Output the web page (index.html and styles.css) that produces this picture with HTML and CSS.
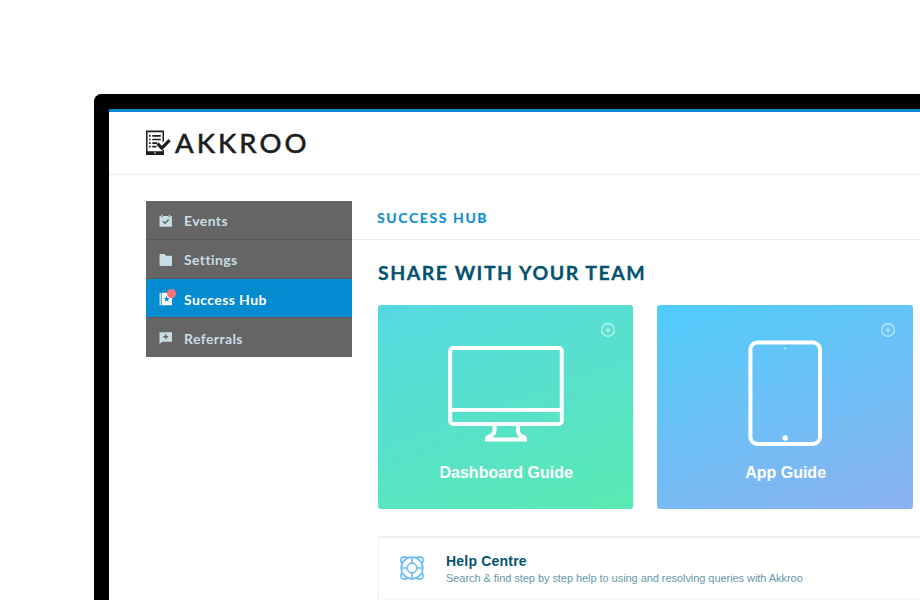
FILE: index.html
```
<!DOCTYPE html>
<html lang="en">
<head>
<meta charset="utf-8">
<title>Akkroo</title>
<link rel="stylesheet" href="styles.css">
</head>
<body>
<div class="device">
  <header class="header">
    <svg class="logo-mark" viewBox="0 0 25 26">
      <path fill="#1d1d1b" fill-rule="evenodd" d="M0 .5h18v10.500l-1.500 1.500V2.300h-15v18.900h15V20H18v5H0zM8 22.400v1.200h1.800v-1.200z"/>
      <path fill="none" stroke="#1d1d1b" stroke-width="1.700" d="M3 5.900h1.700M6.300 5.900h8.500M3 9.500h1.700M6.300 9.500h8.500M3 13.100h1.700M6.300 13.100h5M3 16.700h1.700M6.300 16.700h4"/>
      <path fill="none" stroke="#1d1d1b" stroke-width="3.200" d="M11.600 13.700l4.200 4.400 7.800-8"/>
    </svg>
    <span class="logo-text">AKKROO</span>
  </header>
  <div class="body">
    <nav class="nav">
      <a class="item">
        <svg class="icon" viewBox="0 0 14 14"><path fill="#c7dde6" d="M.5 2h1.500v1.300h1.900V2h5.600v1.300h1.900V2h1.500v10.800H.5zM2.300.7h1.200v1.900H2.300zM9.900.7h1.200v1.900H9.900z"/><path fill="none" stroke="#656565" stroke-width="1.500" d="M4 7.300l2 2 3.700-3.700"/></svg>
        <span>Events</span>
      </a>
      <a class="item">
        <svg class="icon" viewBox="0 0 14 14"><path fill="#c7dde6" d="M.5 2q0-1 1-1h4l1.400 1.700H12q1 0 1 1V12q0 1-1 1H1.500q-1 0-1-1z"/></svg>
        <span>Settings</span>
      </a>
      <a class="item active">
        <svg class="icon" viewBox="0 0 14 14"><path fill="#fff" d="M.6.8h1.200v12.400H.6zM2.700.8H13v12.400H2.700z"/><path fill="#058bd0" d="M7.700 3.800l.9 2.100 2.200.2-1.700 1.500.5 2.200-1.900-1.200-1.900 1.200.5-2.200-1.700-1.500 2.200-.2z"/></svg>
        <i class="dot"></i>
        <span>Success Hub</span>
      </a>
      <a class="item">
        <svg class="icon" viewBox="0 0 14 14"><path fill="#c7dde6" d="M.5 1.300H13v9.400H3.300L.5 13.200z"/><path stroke="#656565" stroke-width="1.400" d="M6.700 3.300v5M4.200 5.800h5"/></svg>
        <span>Referrals</span>
      </a>
    </nav>
    <main class="main">
      <div class="crumb"><span>SUCCESS HUB</span></div>
      <h1 class="title">SHARE WITH YOUR TEAM</h1>
      <div class="cards">
        <section class="card green">
          <svg class="plus" viewBox="0 0 16 16"><circle cx="8" cy="8" r="6.300"/><path d="M8 5.300v5.400M5.300 8h5.400"/></svg>
          <svg class="art" viewBox="0 0 120 110"><rect x="4.200" y="6" width="111.600" height="76" rx="3"/><path d="M4 68h112M48.500 82v6c0 4.500-3 6-6 7q-1.500.4-1.500 2.600h38q0-2.200-1.500-2.600c-3-.8-5.500-2.500-5.500-7v-6"/></svg>
          <h2>Dashboard Guide</h2>
        </section>
        <section class="card blue">
          <svg class="plus" viewBox="0 0 16 16"><circle cx="8" cy="8" r="6.300"/><path d="M8 5.300v5.400M5.300 8h5.400"/></svg>
          <svg class="art" viewBox="0 0 120 110"><rect x="25.400" y=".5" width="69.600" height="101.500" rx="7"/><circle class="fill" cx="60.200" cy="6.300" r=".9"/><circle class="fill" cx="60.200" cy="96" r="2.700"/></svg>
          <h2>App Guide</h2>
        </section>
      </div>
      <section class="help">
        <svg class="ring" viewBox="0 0 24 24"><circle cx="12" cy="12" r="10.800"/><circle cx="12" cy="12" r="4.800"/><path d="M12 1.200v6M12 16.800v6M1.200 12h6M16.800 12h6M8 1.900L4.500.9Q.9.900.9 4.500L1.900 8M16 1.900l3.500-1q3.600 0 3.600 3.600l-1 3.500M8 22.100l-3.500 1Q.9 23.100.9 19.500l1-3.500M16 22.100l3.500 1q3.600 0 3.600-3.600l-1-3.500"/></svg>
        <div>
          <h3>Help Centre</h3>
          <p>Search &amp; find step by step help to using and resolving queries with Akkroo</p>
        </div>
      </section>
    </main>
  </div>
</div>
</body>
</html>
```
FILE: styles.css
```
* { box-sizing: border-box; }
html, body { margin: 0; height: 600px; overflow: hidden; background: #fff; }
body { padding: 94px 0 0 94px; font-family: Lato, "Liberation Sans", sans-serif; }
h1, h2, h3, p { margin: 0; white-space: nowrap; }
.device { height: 506px; border: solid #000; border-width: 15px 0 0 15px; border-radius: 8px 0 0 0; background: #fff; }
.header { height: 66px; border-top: 3px solid #058bd0; border-bottom: 1px solid #ebebeb; padding: 0 0 0 37px; display: flex; align-items: center; }
.logo-mark { width: 25px; height: 26px; display: block; }
.logo-text { margin-left: 4px; font-size: 27.500px; line-height: 34px; letter-spacing: 3.100px; color: #1d1d1b; -webkit-text-stroke: .6px #1d1d1b; }
.body { display: flex; padding: 26px 0 0 37px; }
.nav { width: 206px; height: 156px; flex: none; background: #656565; }
.item { position: relative; display: flex; align-items: center; height: 39px; padding: 1px 0 0 13px; border-bottom: 1px solid #5a5a5a; color: #c7dde6; font-size: 14px; font-weight: 700; letter-spacing: .4px; }
.item:last-child { border-bottom: 0; }
.active { background: #058bd0; color: #fff; padding-top: 2px; }
.icon { width: 14px; height: 14px; margin-right: 11px; }
.dot { position: absolute; left: 21px; top: 10px; width: 9px; height: 9px; border-radius: 50%; background: #fb7377; }
.main { flex: 1; min-width: 0; }
.crumb { height: 39px; padding: 8px 0 0 25px; border-bottom: 1px solid #ebebeb; color: #0f8fd1; font-size: 14px; line-height: 17px; font-weight: 700; letter-spacing: 1.600px; -webkit-text-stroke: .2px #0f8fd1; }
.title { margin: 20px 0 0 26px; color: #03536f; font-size: 19.500px; line-height: 26px; font-weight: 700; letter-spacing: 1.500px; -webkit-text-stroke: .3px #03536f; }
.cards { display: flex; gap: 24px; margin: 19px 0 0 26px; }
.card { position: relative; flex: none; width: 255.400px; height: 204px; padding-top: 37px; border-radius: 3px; display: flex; flex-direction: column; align-items: center; }
.green { background: linear-gradient(160deg, #55d9e2, #59eab2); }
.blue { background: linear-gradient(160deg, #50cdfb, #8bb1f1); }
.plus { position: absolute; right: 17px; top: 17px; width: 16px; height: 16px; fill: none; stroke: #fff; stroke-width: 1.700; opacity: .5; }
.art { width: 120px; height: 110px; overflow: visible; fill: none; stroke: #fff; stroke-width: 4; }
.art .fill { fill: #fff; stroke: none; }
.card h2 { margin: 10px 0 0 1px; color: #fff; font: 700 16px/22px "Liberation Sans", sans-serif; }
.help { display: flex; margin: 27px 0 0 26px; height: 64px; padding: 16px 0 0 21px; border: 1px solid #eee; border-width: 2px 0 1px 1px; border-bottom-color: #f6f6f6; border-radius: 3px 0 0 0; }
.ring { width: 24px; height: 24px; margin: 2px 22px 0 0; overflow: visible; fill: none; stroke: #6bbcf2; stroke-width: 1.700; }
.help h3 { color: #03536f; font: 700 14px/14px "Liberation Sans", sans-serif; letter-spacing: .2px; }
.help p { margin-top: 4px; color: #6498aa; font: 11px/13px "Liberation Sans", sans-serif; letter-spacing: -.055px; }
```
